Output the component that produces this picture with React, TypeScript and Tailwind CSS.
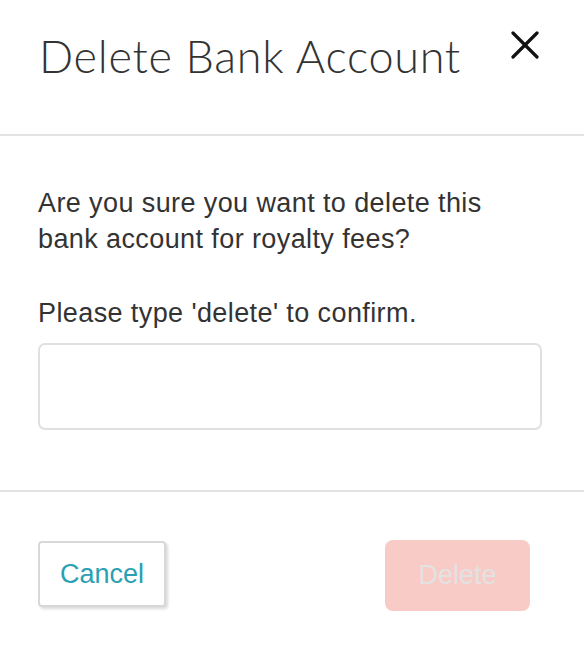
import React from "react";

export default function App() {
  return (
    <div className="w-[584px] h-[645px] bg-white overflow-hidden" style={{ fontFamily: '"Liberation Sans", Arial, sans-serif' }}>
      <div className="h-[134px] flex items-start justify-between pl-[39px] pr-[45px] pt-[31px]">
        <h1
          className="mt-[3px] text-[45px] leading-[45px] font-light tracking-[0.7px] text-[#333]"
          style={{ fontFamily: 'Lato, "Open Sans", sans-serif' }}
        >
          Delete Bank Account
        </h1>
        <button className="w-[28px] h-[28px]" aria-label="Close">
          <svg width="28" height="28" viewBox="0 0 28 28">
            <line x1="2" y1="2" x2="26" y2="26" stroke="#111" strokeWidth="3.2" strokeLinecap="round" />
            <line x1="26" y1="2" x2="2" y2="26" stroke="#111" strokeWidth="3.2" strokeLinecap="round" />
          </svg>
        </button>
      </div>
      <div className="h-[2px] bg-[#e3e3e3]" />
      <div className="h-[354px] pl-[38px] pr-[42px] pt-[49px]">
        <p className="text-[27px] leading-[36px] tracking-[0.4px] text-[#333]">
          Are you sure you want to delete this
          <br />
          bank account for royalty fees?
        </p>
        <p className="mt-[38px] text-[27px] leading-[36px] tracking-[0.4px] text-[#333]">Please type 'delete' to confirm.</p>
        <input
          type="text"
          className="mt-[12px] block w-[504px] h-[87px] rounded-[7px] border-2 border-[#e0e0e0] bg-white outline-none"
        />
      </div>
      <div className="h-[2px] bg-[#e3e3e3]" />
      <div className="flex items-start justify-between pl-[38px] pr-[54px] pt-[48px]">
        <button className="mt-[1px] w-[128px] h-[66px] border-2 border-[#d8d8d8] rounded-[4px] bg-white text-[27px] text-[#2b9fb4] shadow-[2px_2px_3px_rgba(0,0,0,0.15)]">
          Cancel
        </button>
        <button className="w-[145px] h-[71px] rounded-[8px] bg-[#f9cbc6] text-[27px] text-[#e2e2e2]">
          Delete
        </button>
      </div>
    </div>
  );
}
